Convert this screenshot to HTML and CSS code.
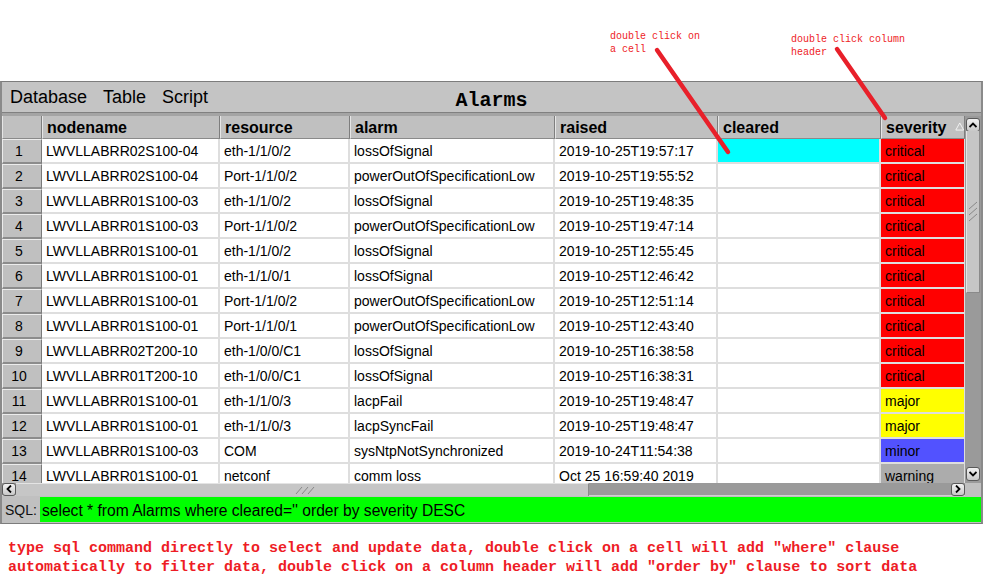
FILE: index.html
```html
<!DOCTYPE html>
<html>
<head>
<meta charset="utf-8">
<link rel="stylesheet" href="styles.css">
</head>
<body>
<div class="page">
  <div class="top-notes">
    <div class="note note-cell">double click on<br>a cell</div>
    <div class="note note-header">double click column<br>header</div>
  </div>

  <div class="window">
    <div class="menubar">
      <div class="menus"><span>Database</span><span>Table</span><span>Script</span></div>
      <div class="title">Alarms</div>
      <div></div>
    </div>

    <div class="tablearea">
      <div class="grid">
        <div class="row hdr">
          <div class="hc"></div>
          <div class="hc">nodename</div>
          <div class="hc">resource</div>
          <div class="hc">alarm</div>
          <div class="hc">raised</div>
          <div class="hc">cleared</div>
          <div class="hc sev-h">severity
            <svg class="sort" width="12" height="11" viewBox="0 0 12 11"><path d="M6 1 L11 10 L1 10 Z" fill="none" stroke="#f4f4f4" stroke-width="1.2"/></svg>
          </div>
        </div>
        <div class="body">
          <div class="row"><div class="rn">1</div><div class="c">LWVLLABRR02S100-04</div><div class="c">eth-1/1/0/2</div><div class="c">lossOfSignal</div><div class="c">2019-10-25T19:57:17</div><div class="c sel"></div><div class="c crit">critical</div></div>
          <div class="row"><div class="rn">2</div><div class="c">LWVLLABRR02S100-04</div><div class="c">Port-1/1/0/2</div><div class="c">powerOutOfSpecificationLow</div><div class="c">2019-10-25T19:55:52</div><div class="c"></div><div class="c crit">critical</div></div>
          <div class="row"><div class="rn">3</div><div class="c">LWVLLABRR01S100-03</div><div class="c">eth-1/1/0/2</div><div class="c">lossOfSignal</div><div class="c">2019-10-25T19:48:35</div><div class="c"></div><div class="c crit">critical</div></div>
          <div class="row"><div class="rn">4</div><div class="c">LWVLLABRR01S100-03</div><div class="c">Port-1/1/0/2</div><div class="c">powerOutOfSpecificationLow</div><div class="c">2019-10-25T19:47:14</div><div class="c"></div><div class="c crit">critical</div></div>
          <div class="row"><div class="rn">5</div><div class="c">LWVLLABRR01S100-01</div><div class="c">eth-1/1/0/2</div><div class="c">lossOfSignal</div><div class="c">2019-10-25T12:55:45</div><div class="c"></div><div class="c crit">critical</div></div>
          <div class="row"><div class="rn">6</div><div class="c">LWVLLABRR01S100-01</div><div class="c">eth-1/1/0/1</div><div class="c">lossOfSignal</div><div class="c">2019-10-25T12:46:42</div><div class="c"></div><div class="c crit">critical</div></div>
          <div class="row"><div class="rn">7</div><div class="c">LWVLLABRR01S100-01</div><div class="c">Port-1/1/0/2</div><div class="c">powerOutOfSpecificationLow</div><div class="c">2019-10-25T12:51:14</div><div class="c"></div><div class="c crit">critical</div></div>
          <div class="row"><div class="rn">8</div><div class="c">LWVLLABRR01S100-01</div><div class="c">Port-1/1/0/1</div><div class="c">powerOutOfSpecificationLow</div><div class="c">2019-10-25T12:43:40</div><div class="c"></div><div class="c crit">critical</div></div>
          <div class="row"><div class="rn">9</div><div class="c">LWVLLABRR02T200-10</div><div class="c">eth-1/0/0/C1</div><div class="c">lossOfSignal</div><div class="c">2019-10-25T16:38:58</div><div class="c"></div><div class="c crit">critical</div></div>
          <div class="row"><div class="rn">10</div><div class="c">LWVLLABRR01T200-10</div><div class="c">eth-1/0/0/C1</div><div class="c">lossOfSignal</div><div class="c">2019-10-25T16:38:31</div><div class="c"></div><div class="c crit">critical</div></div>
          <div class="row"><div class="rn">11</div><div class="c">LWVLLABRR01S100-01</div><div class="c">eth-1/1/0/3</div><div class="c">lacpFail</div><div class="c">2019-10-25T19:48:47</div><div class="c"></div><div class="c major">major</div></div>
          <div class="row"><div class="rn">12</div><div class="c">LWVLLABRR01S100-01</div><div class="c">eth-1/1/0/3</div><div class="c">lacpSyncFail</div><div class="c">2019-10-25T19:48:47</div><div class="c"></div><div class="c major">major</div></div>
          <div class="row"><div class="rn">13</div><div class="c">LWVLLABRR01S100-03</div><div class="c">COM</div><div class="c">sysNtpNotSynchronized</div><div class="c">2019-10-24T11:54:38</div><div class="c"></div><div class="c minor">minor</div></div>
          <div class="row"><div class="rn">14</div><div class="c">LWVLLABRR01S100-01</div><div class="c">netconf</div><div class="c">comm loss</div><div class="c">Oct 25 16:59:40 2019</div><div class="c"></div><div class="c warn">warning</div></div>
        </div>
      </div>

      <div class="vscroll">
        <div class="btn"><svg width="8" height="6" viewBox="0 0 8 6"><path d="M0.5 5 L4 1.5 L7.5 5" fill="none" stroke="#000" stroke-width="1.8"/></svg></div>
        <div class="vthumb">
          <svg class="grip" width="12" height="22" viewBox="0 0 12 22"><path d="M2 8 L10 1 M2 14 L10 7 M2 20 L10 13" stroke="#888" stroke-width="1"/></svg>
        </div>
        <div class="vtrack"></div>
        <div class="btn"><svg width="8" height="6" viewBox="0 0 8 6"><path d="M0.5 1 L4 4.5 L7.5 1" fill="none" stroke="#000" stroke-width="1.8"/></svg></div>
        <div class="vgap"></div>
      </div>
    </div>

    <div class="hscroll">
      <div class="btn hbtn"><svg width="6" height="8" viewBox="0 0 6 8"><path d="M5 0.5 L1.5 4 L5 7.5" fill="none" stroke="#000" stroke-width="1.8"/></svg></div>
      <div class="hthumb">
        <svg class="grip" width="22" height="10" viewBox="0 0 22 10"><path d="M1 9 L7 2 M7 9 L13 2 M13 9 L19 2" stroke="#888" stroke-width="1"/></svg>
      </div>
      <div class="htrack"></div>
      <div class="btn hbtn"><svg width="6" height="8" viewBox="0 0 6 8"><path d="M1 0.5 L4.5 4 L1 7.5" fill="none" stroke="#000" stroke-width="1.8"/></svg></div>
      <div class="corner"></div>
    </div>

    <div class="sqlbar">
      <span class="sql-label">SQL:</span>
      <div class="sql-input">select * from Alarms where cleared='' order by severity DESC</div>
    </div>
  </div>

  <div class="bottom-note">type sql command directly to select and update data, double click on a cell will add "where" clause<br>automatically to filter data, double click on a column header will add "order by" clause to sort data</div>

  <svg class="arrows" width="983" height="588" viewBox="0 0 983 588">
    <line x1="657" y1="50" x2="728" y2="152" stroke="#e8202a" stroke-width="4.5" stroke-linecap="round"/>
    <line x1="837" y1="49" x2="885" y2="118" stroke="#e8202a" stroke-width="4.5" stroke-linecap="round"/>
  </svg>
</div>
</body>
</html>
```

FILE: styles.css
```css
* { box-sizing: border-box; }

html, body {
  margin: 0;
  padding: 0;
  background: #ffffff;
}

.page {
  position: relative;
  width: 983px;
  height: 588px;
  overflow: hidden;
  font-family: "Liberation Sans", Arial, sans-serif;
  color: #000;
}

/* top annotations */
.top-notes {
  height: 81px;
  display: flex;
  align-items: flex-start;
  padding-left: 610px;
}

.note {
  font-family: "Liberation Mono", "Courier New", monospace;
  font-size: 10px;
  line-height: 13px;
  color: #ee1c25;
  white-space: nowrap;
}

.note-cell {
  width: 181px;
  margin-top: 30px;
}

.note-header {
  margin-top: 33px;
}

/* window */
.window {
  width: 983px;
  background: #c0c0c0;
  border-top: 1px solid #7c7c7c;
  border-left: 2px solid #8a8a8a;
  border-right: 2px solid #8a8a8a;
  border-bottom: 1px solid #7c7c7c;
}

.menubar {
  height: 31px;
  display: grid;
  grid-template-columns: 1fr auto 1fr;
  background: #c4c4c4;
  border-bottom: 1px solid #808080;
}

.menus {
  display: flex;
  gap: 16px;
  padding-left: 8px;
  font-size: 18px;
  line-height: 30px;
}

.title {
  align-self: end;
  font-family: "Liberation Mono", "Courier New", monospace;
  font-weight: bold;
  font-size: 20px;
  line-height: 22px;
  padding-bottom: 0px;
}

/* table */
.tablearea {
  display: flex;
  height: 370px;
  border-top: 3px solid #a4a4a4;
}

.grid {
  width: 963px;
  display: flex;
  flex-direction: column;
}

.row {
  display: grid;
  grid-template-columns: 40px 178px 130px 205px 163px 163px 84px;
  height: 25px;
}

.hdr {
  height: 23px;
}

.hc {
  background: #c0c0c0;
  border-left: 1px solid #e6e6e6;
  border-right: 1px solid #7e7e7e;
  border-bottom: 1px solid #8a8a8a;
  padding-left: 4px;
  padding-top: 1px;
  font-weight: bold;
  font-size: 16px;
  line-height: 21px;
  white-space: nowrap;
  overflow: hidden;
}

.sev-h {
  display: flex;
  align-items: center;
}

.sort {
  margin-left: 8px;
  margin-top: -2px;
}

.body {
  height: 344px;
  overflow: hidden;
  background: #fff;
}

.rn {
  background: #c0c0c0;
  border-top: 1px solid #ececec;
  border-left: 1px solid #ececec;
  border-right: 1px solid #7a7a7a;
  border-bottom: 2px solid #8c8c8c;
  text-align: center;
  padding-right: 6px;
  padding-top: 1px;
  font-size: 14px;
  line-height: 21px;
}

.c {
  background: #fff;
  border-right: 2px solid #dedede;
  border-bottom: 2px solid #dedede;
  padding-left: 4px;
  padding-top: 2px;
  font-size: 14px;
  line-height: 21px;
  white-space: nowrap;
  overflow: hidden;
}

.c:last-child {
  border-right: 1px solid #dedede;
}

.sel { background: #00ffff; }
.crit { background: #ff0000; }
.major { background: #ffff00; }
.minor { background: #5252ff; }
.warn { background: #acacac; }

/* vertical scrollbar */
.vscroll {
  width: 16px;
  display: flex;
  flex-direction: column;
  align-items: center;
  background: #9a9a9a;
  padding-top: 2px;
}

.btn {
  width: 14px;
  height: 14px;
  flex: none;
  border: 1px solid #5a5a5a;
  border-radius: 3px;
  background: linear-gradient(#f2f2f2, #c8c8c8);
  display: flex;
  align-items: center;
  justify-content: center;
}

.vthumb {
  width: 14px;
  height: 162px;
  flex: none;
  background: #c6c6c6;
  border-left: 1px solid #e4e4e4;
  border-right: 1px solid #8a8a8a;
  border-bottom: 1px solid #8a8a8a;
  display: flex;
  align-items: center;
  justify-content: center;
  margin-top: -1px;
}

.vtrack {
  flex: 1;
}

.vgap {
  height: 2px;
  flex: none;
}

/* horizontal scrollbar */
.hscroll {
  height: 13px;
  display: flex;
  align-items: center;
  background: #9a9a9a;
  border-bottom: 1px solid #d0d0d0;
}

.hbtn {
  width: 14px;
  height: 13px;
}

.hthumb {
  width: 573px;
  height: 13px;
  flex: none;
  background: #c6c6c6;
  border-top: 1px solid #e4e4e4;
  border-right: 1px solid #8a8a8a;
  display: flex;
  align-items: center;
  justify-content: center;
  padding-left: 8px;
}

.htrack {
  flex: 1;
  height: 13px;
}

.corner {
  width: 16px;
  height: 13px;
  background: #c0c0c0;
}

/* SQL bar */
.sqlbar {
  height: 27px;
  display: flex;
  align-items: stretch;
  background: #c0c0c0;
}

.sql-label {
  width: 38px;
  padding-left: 3px;
  padding-top: 1px;
  font-size: 14px;
  line-height: 26px;
  color: #111;
}

.sql-input {
  flex: 1;
  margin: 1px 0 1px 0;
  background: #00ff00;
  padding-left: 2px;
  padding-top: 2px;
  font-size: 15.6px;
  line-height: 23px;
  white-space: nowrap;
  overflow: hidden;
}

/* bottom note */
.bottom-note {
  margin-top: 15px;
  padding-left: 8px;
  font-family: "Liberation Mono", "Courier New", monospace;
  font-weight: bold;
  font-size: 15px;
  line-height: 19px;
  color: #ee1c25;
  white-space: nowrap;
}

.arrows {
  position: absolute;
  left: 0;
  top: 0;
  pointer-events: none;
}
```
